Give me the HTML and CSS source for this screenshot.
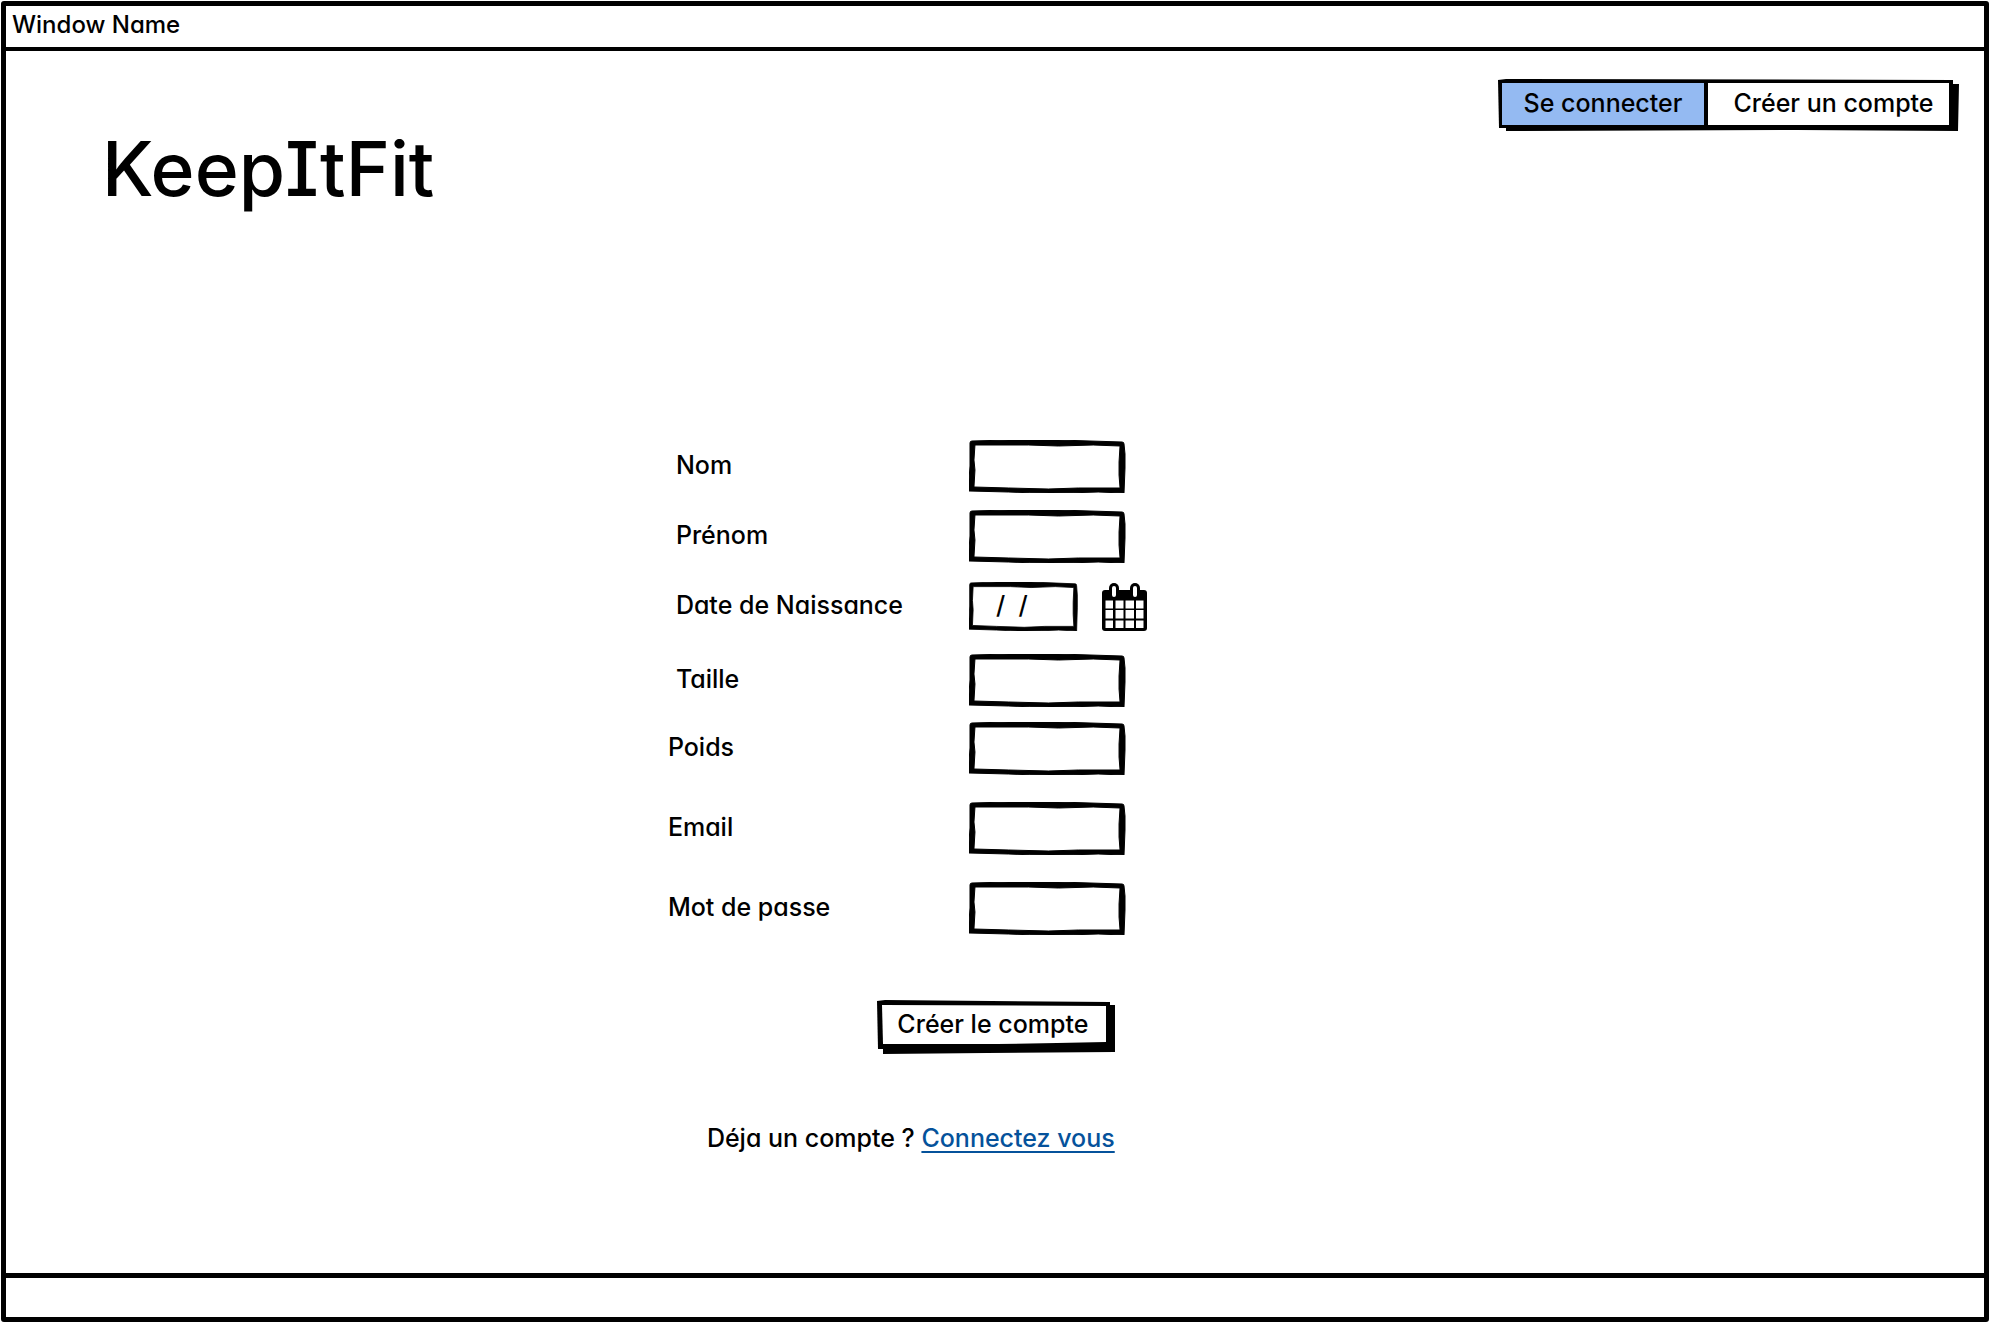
FILE: index.html
```html
<!DOCTYPE html>
<html lang="fr">
<head>
  <meta charset="utf-8">
  <meta name="viewport" content="width=device-width, initial-scale=1">
  <title>KeepItFit</title>
  <link rel="stylesheet" href="styles.css">
</head>
<body>
  <div class="window">
    <div class="title-bar">Window Name</div>
    <header class="header">
      <h1 class="brand">KeepItFit</h1>
      <nav class="switch" aria-label="Compte">
        <button type="button" class="switch-item switch-item-active">Se connecter</button>
        <button type="button" class="switch-item switch-item-last">Créer un compte</button>
      </nav>
    </header>
    <main class="content">
      <form class="form">
        <div class="group group-person">
          <div class="row">
            <label class="label" for="nom">Nom</label>
            <input class="field" id="nom" type="text">
          </div>
          <div class="row">
            <label class="label" for="prenom">Prénom</label>
            <input class="field" id="prenom" type="text">
          </div>
          <div class="row">
            <label class="label" for="naissance">Date de Naissance</label>
            <input class="field field-date" id="naissance" type="text" value="/  /">
            <button type="button" class="calendar" aria-label="Calendrier">
              <svg class="calendar-icon" viewBox="0 0 45 48" aria-hidden="true">
                <rect x="0" y="7" width="45" height="41" rx="3"/>
                <rect x="7" y="0" width="10" height="16" rx="5"/>
                <rect x="28" y="0" width="10" height="16" rx="5"/>
                <g fill="#fff">
                  <rect x="10" y="3" width="4" height="11" rx="2"/>
                  <rect x="31" y="3" width="4" height="11" rx="2"/>
                  <path d="M3.500 17.500h7.500v8h-7.500zM13.500 17.500h8v8h-8zM23.500 17.500h8.500v8h-8.500zM34 17.500h7.500v8h-7.500zM3.500 27h7.500v8.500h-7.500zM13.500 27h8v8.500h-8zM23.500 27h8.500v8.500h-8.500zM34 27h7.500v8.500h-7.500zM3.500 37.500h7.500v7.500h-7.500zM13.500 37.500h8v7.500h-8zM23.500 37.500h8.500v7.500h-8.500zM34 37.500h7.500v7.500h-7.500z"/>
                </g>
              </svg>
            </button>
          </div>
        </div>
        <div class="group group-body">
          <div class="row row-indent">
            <label class="label" for="taille">Taille</label>
            <input class="field" id="taille" type="text">
          </div>
          <div class="row">
            <label class="label" for="poids">Poids</label>
            <input class="field" id="poids" type="text">
          </div>
        </div>
        <div class="group group-login">
          <div class="row">
            <label class="label" for="email">Email</label>
            <input class="field" id="email" type="email">
          </div>
          <div class="row">
            <label class="label" for="passe">Mot de passe</label>
            <input class="field" id="passe" type="password">
          </div>
        </div>
        <button type="submit" class="submit">Créer le compte</button>
        <p class="signin">Déja un compte ? <a class="link" href="#connexion">Connectez vous</a></p>
      </form>
    </main>
    <footer class="status-bar"></footer>
  </div>
</body>
</html>
```
FILE: styles.css
```css
* {
  box-sizing: border-box;
}

body {
  margin: 0;
  padding: 1px 1px 2px;
  background: #fff;
  color: #000;
  font: 500 25px/32px Inter, "Liberation Sans", sans-serif;
  /* single-storey a and capital I with serifs */
  font-feature-settings: "cv11", "cv08";
}

button,
input {
  border: 0;
  padding: 0;
  background: none;
  color: inherit;
  font: inherit;
  font-feature-settings: inherit;
}

.window {
  display: flex;
  flex-direction: column;
  min-height: calc(100vh - 3px);
  border: 5px solid #000;
  border-radius: 3px;
}

.title-bar {
  height: 45px;
  padding: 3px 6px;
  border-bottom: 4px solid #000;
  font-size: 24px;
}

.header {
  display: flex;
  justify-content: space-between;
  align-items: flex-start;
  padding: 28px 25px 0 96px;
}

.brand {
  margin: 42px 0 0;
  font-size: 75px;
  line-height: 96px;
  font-weight: 500;
}

.switch {
  display: flex;
  width: 461px;
  height: 53px;
  padding: 4px 10px 7px 4px;
  background: url("data:image/svg+xml,%3Csvg xmlns='http://www.w3.org/2000/svg' viewBox='0 0 461 53' preserveAspectRatio='none'%3E%3Cpath d='M8 6L461 5L460 52L300 51L8 52Z'/%3E%3Cpath d='M0 1L8 0L455 1L455 48L1 49Z'/%3E%3Cpath d='M4 4H451V46H4Z' fill='%23fff'/%3E%3C/svg%3E") 0 0 / 100% 100% no-repeat;
}

.switch-item {
  flex: 1 1 245px;
  padding-bottom: 2px;
}

.switch-item-active {
  flex-basis: 202px;
  background: #94baf2;
}

.switch-item-last {
  padding-left: 10px;
  border-left: 4px solid #000;
}

.content {
  display: grid;
  flex: 1;
  grid-template-columns: minmax(0, 15fr) 480px minmax(0, 19fr);
}

.form {
  display: flex;
  flex-direction: column;
  grid-column: 2;
  padding-top: 223px;
}

.group {
  display: flex;
  flex-direction: column;
}

.group-person {
  gap: 17px;
}

.group-body {
  gap: 15px;
  padding-top: 21px;
}

.group-login {
  gap: 27px;
  padding-top: 27px;
}

.row {
  display: flex;
  align-items: center;
}

.label {
  width: 302px;
  padding: 0 0 4px 1px;
}

.group-person .label,
.row-indent .label {
  padding-left: 9px;
}

.field {
  width: 157px;
  height: 53px;
  padding: 0 10px 4px;
  background: url("data:image/svg+xml,%3Csvg xmlns='http://www.w3.org/2000/svg' viewBox='0 0 158 53' preserveAspectRatio='none'%3E%3Cpath fill-rule='evenodd' stroke='%23000' stroke-width='1' d='M3 1L40 0H90L154 2Q156 2 156 4L157 14V28L156 53L130 52Q80 54 40 52L0 51V40L1 26L1 3Q1 1 3 1ZM6 5L5 20L6 30L5 47L40 48L80 49L110 48L152 48L151 35L151 22L152 6L125 5L90 6L60 5Z'/%3E%3C/svg%3E") 0 0 / 100% 100% no-repeat;
}

.field-date {
  width: 109px;
  height: 49px;
  margin: 2px 0;
  padding: 0 27px 4px;
}

.calendar {
  display: flex;
  margin-left: 24px;
}

.calendar-icon {
  width: 45px;
  height: 48px;
}

.submit {
  width: 238px;
  height: 54px;
  margin: 65px 0 0 210px;
  padding: 0 8px 7px 2px;
  background: url("data:image/svg+xml,%3Csvg xmlns='http://www.w3.org/2000/svg' viewBox='0 0 238 54' preserveAspectRatio='none'%3E%3Cpath d='M6 6L238 5V52L110 53L6 54Z'/%3E%3Cpath d='M0 1L8 0L233 2V48L1 49Z'/%3E%3Cpath d='M5 5L229 6V42L180 43L120 44H6Z' fill='%23fff'/%3E%3C/svg%3E") 0 0 / 100% 100% no-repeat;
}

.signin {
  margin: 68px 0 32px 40px;
  white-space: nowrap;
}

.link {
  color: #05529b;
  text-decoration-thickness: 2px;
  text-underline-offset: 4px;
  text-decoration-skip-ink: none;
}

.status-bar {
  height: 44px;
  border-top: 5px solid #000;
}
```
